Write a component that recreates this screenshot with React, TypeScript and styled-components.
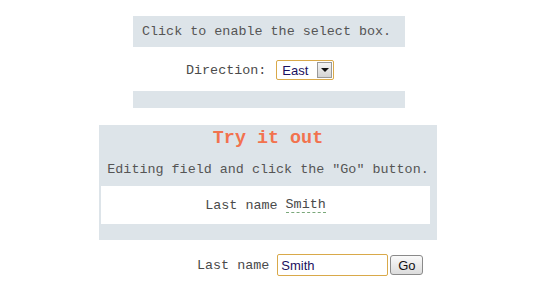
import React, { useState } from 'react'
import styled, { createGlobalStyle } from 'styled-components'

const GlobalStyle = createGlobalStyle`
  body {
    margin: 0;
    background: #fff;
    font-family: "Liberation Mono", "DejaVu Sans Mono", monospace;
    color: #444;
  }
`

const Page = styled.div`
  width: 538px;
  height: 300px;
  display: flex;
  flex-direction: column;
  align-items: center;
  padding-top: 16px;
  box-sizing: border-box;
`

const Panel = styled.div<{ $width: number; $height?: number }>`
  width: ${(p) => p.$width}px;
  height: ${(p) => (p.$height ? `${p.$height}px` : 'auto')};
  background: #dde4e9;
  box-sizing: border-box;
`

const Hint = styled.div`
  font-size: 13.4px;
  line-height: 31px;
  padding-left: 9px;
  color: #555;
  cursor: pointer;
`

const FieldRow = styled.div<{ $left: number; $top: number; $bottom: number }>`
  align-self: flex-start;
  display: flex;
  align-items: center;
  gap: 8px;
  margin: ${(p) => `${p.$top}px 0 ${p.$bottom}px ${p.$left}px`};
  font-size: 13.4px;
  color: #4a4a4a;
`

const SelectBox = styled.div`
  display: flex;
  align-items: center;
  width: 58px;
  height: 20px;
  margin-left: 2px;
  box-sizing: border-box;
  border: 1px solid #d9a94a;
  border-radius: 2px;
  background: #fff;
  padding: 1px;
  font-family: "Liberation Sans", Arial, sans-serif;
  font-size: 13px;
  color: #1a1060;
`

const SelectText = styled.span`
  flex: 1;
  padding-left: 4px;
`

const Arrow = styled.span`
  width: 15px;
  height: 16px;
  box-sizing: border-box;
  border: 1px solid #999;
  background: linear-gradient(#f4f4f4, #d4d4d4);
  display: flex;
  align-items: center;
  justify-content: center;
  &::after {
    content: '';
    border-left: 4px solid transparent;
    border-right: 4px solid transparent;
    border-top: 4px solid #111;
  }
`

const TryBox = styled(Panel)`
  display: flex;
  flex-direction: column;
  margin-right: 2px;
  padding: 4px 0 16px;
`

const Title = styled.h3`
  margin: 0;
  font-size: 18.4px;
  line-height: 20px;
  font-weight: bold;
  color: #f2724e;
  text-align: center;
`

const Lead = styled.p`
  margin: 11px 0 6px;
  font-size: 13.4px;
  line-height: 20px;
  color: #555;
  text-align: center;
  white-space: nowrap;
`

const Output = styled.div`
  margin: 0 7px 0 2px;
  background: #fff;
  height: 38px;
  display: flex;
  align-items: center;
  justify-content: center;
  font-size: 13.4px;
  color: #4a4a4a;
  gap: 8px;
`

const Spelled = styled.span`
  border-bottom: 1px dashed #7aa87a;
  line-height: 15px;
`

const NameInput = styled.input`
  width: 111px;
  height: 22px;
  box-sizing: border-box;
  border: 1px solid #d9a94a;
  border-radius: 2px;
  padding: 1px 3px;
  font-family: "Liberation Sans", Arial, sans-serif;
  font-size: 13px;
  color: #1a1060;
  outline: none;
`

const GoButton = styled.button`
  margin-left: -6px;
  width: 33px;
  height: 20px;
  padding: 0;
  border: 1px solid #8a8a8a;
  border-radius: 3px;
  background: linear-gradient(#fafafa, #dcdcdc);
  font-family: "Liberation Sans", Arial, sans-serif;
  font-size: 13px;
  color: #111;
`

const Gap = styled.div<{ $h: number }>`
  height: ${(p) => p.$h}px;
`

export default function App() {
  const [name, setName] = useState('Smith')
  const [shown, setShown] = useState('Smith')
  return (
    <Page>
      <GlobalStyle />
      <Panel $width={272} $height={31}>
        <Hint>Click to enable the select box.</Hint>
      </Panel>
      <FieldRow $left={186} $top={13} $bottom={11}>
        Direction:
        <SelectBox>
          <SelectText>East</SelectText>
          <Arrow />
        </SelectBox>
      </FieldRow>
      <Panel $width={272} $height={17} />
      <Gap $h={17} />
      <TryBox $width={338}>
        <Title>Try it out</Title>
        <Lead>Editing field and click the ″Go″ button.</Lead>
        <Output>
          <span>Last name</span>
          <Spelled>{shown}</Spelled>
        </Output>
      </TryBox>
      <FieldRow $left={197} $top={14} $bottom={0}>
        Last name
        <NameInput value={name} onChange={(e) => setName(e.target.value)} />
        <GoButton onClick={() => setShown(name)}>Go</GoButton>
      </FieldRow>
    </Page>
  )
}
